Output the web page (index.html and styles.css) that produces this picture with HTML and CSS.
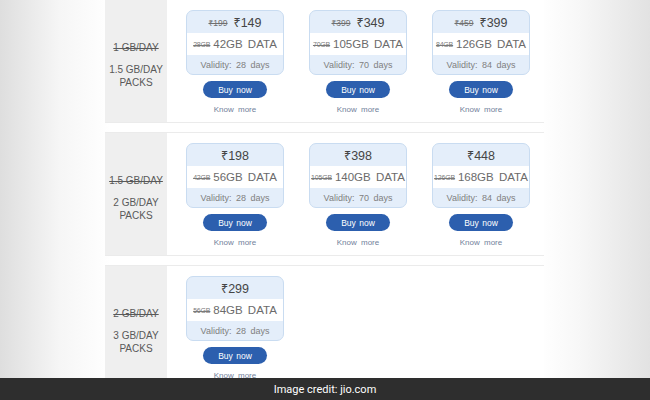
FILE: index.html
```html
<!DOCTYPE html>
<html>
<head>
<meta charset="utf-8">
<link rel="stylesheet" href="styles.css">
</head>
<body>
<div class="page">
  <div class="list">
    <div class="row first">
      <div class="label">
        <div class="old">1 GB/DAY</div>
        <div class="new">1.5 GB/DAY<br>PACKS</div>
      </div>
      <div class="plans">
        <div class="plan">
          <div class="card">
            <div class="price"><s class="was">₹199</s><span class="now">₹149</span></div>
            <div class="data"><s class="was-data">28GB</s><span class="amt">42GB DATA</span></div>
            <div class="validity">Validity: 28 days</div>
          </div>
          <div class="buy">Buy now</div>
          <div class="more">Know more</div>
        </div>
        <div class="plan">
          <div class="card">
            <div class="price"><s class="was">₹399</s><span class="now">₹349</span></div>
            <div class="data"><s class="was-data">70GB</s><span class="amt">105GB DATA</span></div>
            <div class="validity">Validity: 70 days</div>
          </div>
          <div class="buy">Buy now</div>
          <div class="more">Know more</div>
        </div>
        <div class="plan">
          <div class="card">
            <div class="price"><s class="was">₹459</s><span class="now">₹399</span></div>
            <div class="data"><s class="was-data">84GB</s><span class="amt">126GB DATA</span></div>
            <div class="validity">Validity: 84 days</div>
          </div>
          <div class="buy">Buy now</div>
          <div class="more">Know more</div>
        </div>
      </div>
    </div>
    <div class="row">
      <div class="label">
        <div class="old">1.5 GB/DAY</div>
        <div class="new">2 GB/DAY<br>PACKS</div>
      </div>
      <div class="plans">
        <div class="plan">
          <div class="card">
            <div class="price"><span class="now">₹198</span></div>
            <div class="data"><s class="was-data">42GB</s><span class="amt">56GB DATA</span></div>
            <div class="validity">Validity: 28 days</div>
          </div>
          <div class="buy">Buy now</div>
          <div class="more">Know more</div>
        </div>
        <div class="plan">
          <div class="card">
            <div class="price"><span class="now">₹398</span></div>
            <div class="data"><s class="was-data">105GB</s><span class="amt">140GB DATA</span></div>
            <div class="validity">Validity: 70 days</div>
          </div>
          <div class="buy">Buy now</div>
          <div class="more">Know more</div>
        </div>
        <div class="plan">
          <div class="card">
            <div class="price"><span class="now">₹448</span></div>
            <div class="data"><s class="was-data">126GB</s><span class="amt">168GB DATA</span></div>
            <div class="validity">Validity: 84 days</div>
          </div>
          <div class="buy">Buy now</div>
          <div class="more">Know more</div>
        </div>
      </div>
    </div>
    <div class="row">
      <div class="label">
        <div class="old">2 GB/DAY</div>
        <div class="new">3 GB/DAY<br>PACKS</div>
      </div>
      <div class="plans">
        <div class="plan">
          <div class="card">
            <div class="price"><span class="now">₹299</span></div>
            <div class="data"><s class="was-data">56GB</s><span class="amt">84GB DATA</span></div>
            <div class="validity">Validity: 28 days</div>
          </div>
          <div class="buy">Buy now</div>
          <div class="more">Know more</div>
        </div>
      </div>
    </div>
  </div>
  <div class="credit">Image credit: jio.com</div>
</div>
</body>
</html>
```

FILE: styles.css
```css
html, body {
  margin: 0;
  padding: 0;
}
body {
  width: 650px;
  height: 400px;
  overflow: hidden;
  font-family: "Liberation Sans", "Noto Sans", "DejaVu Sans", sans-serif;
}
.page {
  position: relative;
  width: 650px;
  height: 400px;
  overflow: hidden;
  background: linear-gradient(to right, #dedede 0px, #f6f6f6 60px, #ffffff 110px, #ffffff 540px, #f7f7f7 580px, #e2e2e2 650px);
}
.list {
  margin-left: 105px;
  width: 439px;
  display: flex;
  flex-direction: column;
  gap: 9px;
}
.row {
  display: flex;
  height: 122px;
  flex: none;
  border-top: 1px solid #ebebeb;
  border-bottom: 1px solid #ebebeb;
  background: #fff;
}
.row.first {
  margin-top: -1px;
}
.label {
  width: 62px;
  flex: none;
  background: #efefef;
  display: flex;
  flex-direction: column;
  align-items: center;
  justify-content: center;
  padding-top: 8px;
  box-sizing: border-box;
  color: #595959;
  font-size: 10px;
  line-height: 13px;
  text-align: center;
}
.label .old {
  text-decoration: line-through;
  margin-bottom: 9px;
}
.plans {
  display: flex;
  gap: 25px;
  padding-left: 19px;
  padding-top: 10px;
}
.plan {
  width: 98px;
  display: flex;
  flex-direction: column;
  align-items: center;
}
.card {
  width: 98px;
  box-sizing: border-box;
  border: 1px solid #c9dcf1;
  border-radius: 7px;
  background: #e4eefa;
  overflow: hidden;
}
.price {
  height: 22px;
  display: flex;
  align-items: center;
  justify-content: center;
  gap: 6px;
  white-space: nowrap;
}
.was {
  font-size: 8.5px;
  color: #707070;
}
.now {
  font-size: 12.5px;
  color: #454545;
}
.data {
  height: 22px;
  background: #fff;
  display: flex;
  align-items: center;
  justify-content: center;
  gap: 3px;
  white-space: nowrap;
}
.was-data {
  font-size: 7px;
  color: #7a7a7a;
  letter-spacing: -0.2px;
}
.amt {
  font-size: 11.5px;
  color: #6b6b6b;
  word-spacing: 2px;
}
.validity {
  height: 19px;
  display: flex;
  align-items: center;
  justify-content: center;
  font-size: 9px;
  color: #808080;
  word-spacing: 2px;
  white-space: nowrap;
}
.buy {
  margin-top: 6px;
  width: 64px;
  height: 17px;
  border-radius: 9px;
  background: #2c5fae;
  color: #fff;
  font-size: 8.5px;
  display: flex;
  align-items: center;
  justify-content: center;
  word-spacing: 1px;
}
.more {
  margin-top: 7px;
  font-size: 8px;
  line-height: 10px;
  color: #72819b;
  word-spacing: 2px;
}
.credit {
  position: absolute;
  left: 0;
  right: 0;
  bottom: 0;
  height: 22px;
  background: #2e2e2e;
  color: #fff;
  font-family: Roboto, "Liberation Sans", sans-serif;
  font-size: 11px;
  display: flex;
  align-items: center;
  justify-content: center;
}
```
